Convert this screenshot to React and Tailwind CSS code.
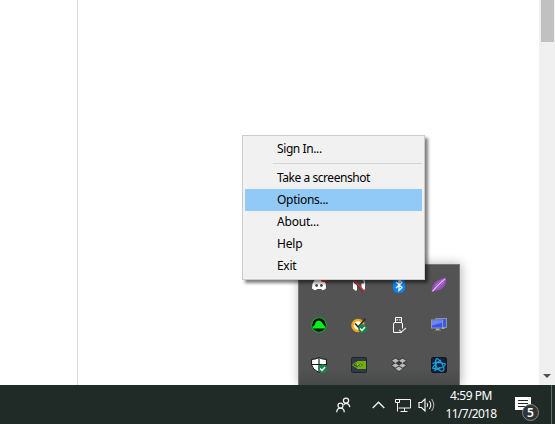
import React from "react";

const Svg = ({ w = 16, h = 16, children }) => (
  <svg width={w} height={h} viewBox={`0 0 ${w} ${h}`} fill="none" className="block shrink-0">
    {children}
  </svg>
);

const Check = ({ x = 11.6, y = 11.6, r = 4.4 }) => (
  <g>
    <circle cx={x} cy={y} r={r} fill="#17834a" />
    <path d={`M${x - 2.4} ${y}l1.8 1.8l3-3.4`} stroke="#fff" strokeWidth="1.4" />
  </g>
);

const Discord = () => (
  <Svg>
    <path d="M3.5 3Q5 2.300 6 2.300l.6.8h3L10.200 2.300q1.500 0 2.800.7Q15.300 6.500 15 11.400Q13 13 11.300 13.200l-.9-1.300H5.800L5 13.200Q3 13 1 11.400Q.8 6.500 3.500 3Z" fill="#fff" />
    <circle cx="5.600" cy="8.500" r="1.400" fill="#484848" />
    <circle cx="10.400" cy="8.500" r="1.400" fill="#484848" />
    <circle cx="13" cy="2" r="3.300" fill="#d8303a" />
  </Svg>
);

const Headset = () => (
  <Svg>
    <path d="M2.500 8V5.500a5.500 5 0 0 1 11 0v2.500" stroke="#f0f0f0" strokeWidth="1.200" />
    <path d="M2 6.500h4v7H4L2 11.500Z" fill="#fff" />
    <path d="M10.500 6.500H14V12l-1.500 1.500h-2Z" fill="#fff" />
    <path d="M2 2.500L13 15" stroke="#404040" strokeWidth="2.200" />
    <path d="M2 2L13.500 14.500" stroke="#e33636" strokeWidth="1.300" />
  </Svg>
);

const Bluetooth = () => (
  <Svg>
    <rect x="2" y="0" width="12" height="16" rx="5.500" fill="#0a84f5" />
    <path d="M5 5l6 5.500L8 13.500v-11L11 5.500L5 11" stroke="#fff" strokeWidth="1.300" />
  </Svg>
);

const Feather = () => (
  <Svg>
    <path d="M.6 15.500C.5 8 4 3 15 .3C16 6 14 10.500 9 12.800C6 14 3.500 13.500 .6 15.500Z" fill="#9150b5" />
    <path d="M1.500 14.300C5 9.800 9 6 14 2" stroke="#e0bdf3" strokeWidth="1.200" />
    <path d="M3.500 9Q7 5.500 11 3M5.500 12Q10 9 13 5" stroke="#b77bd6" strokeWidth=".8" />
  </Svg>
);

const Cloud = () => (
  <Svg>
    <circle cx="8" cy="8" r="7.300" fill="#000" stroke="#0cb518" strokeWidth="1.100" />
    <path d="M2 11.500V9.500l2-1.700Q4.200 3.800 7.500 3.500Q10.500 3.500 11.500 6.200l2.500 3.300v2Z" fill="#00f514" />
  </Svg>
);

const Norton = () => (
  <Svg>
    <circle cx="7" cy="8.500" r="5.500" fill="#fffbed" stroke="#efa71d" strokeWidth="2.500" />
    <path d="M4 6.500L7.300 10L14.500 1.500" stroke="#30302d" strokeWidth="1.800" />
    <Check />
  </Svg>
);

const Usb = () => (
  <Svg>
    <path d="M4.500 5.500V.5h6v5M2.500 15.500V7Q2.500 5.500 4 5.500h6q1.500 0 1.500 1.500v4.500M2.500 15.500h8V14" stroke="#fff" />
    <path d="M5.500 2.200h1.300v1.300H5.500ZM8.200 2.200h1.300v1.300H8.200Z" fill="#fff" />
    <path d="M8 13l2.400 2L15 11" stroke="#d8d8d8" strokeWidth="1.200" />
  </Svg>
);

const Monitors = () => (
  <Svg>
    <rect x="5" y="1.500" width="10.500" height="9" fill="#385cf2" stroke="#8b93a0" />
    <rect x=".5" y="3" width="11" height="8" fill="#3854f2" stroke="#9098a6" />
    <path d="M1 3.500h10v2.200L1 8.500Z" fill="#7084fa" />
    <path d="M5 11.500h3.500V13H5ZM11 10.500h2.500V12H11Z" fill="#aaa" />
    <path d="M4 13.500h6" stroke="#777" />
  </Svg>
);

const Shield = () => (
  <Svg>
    <path d="M8 .5Q11 2.400 15.400 2.400V8Q14.500 12.500 8 15.500Q1.500 12.500 .6 8V2.400Q5 2.400 8 .5Z" fill="#fff" stroke="#111" />
    <path d="M8 1v14M1 7.500h14" stroke="#111" strokeWidth="1.100" />
    <Check />
  </Svg>
);

const Nvidia = () => (
  <Svg>
    <rect x=".5" y=".5" width="15" height="15" rx="1" fill="#303947" stroke="#1e252e" />
    <path d="M6 4h9v8H6Z" fill="#72ad08" />
    <path d="M1.500 8Q6 2.500 13 8Q6.500 13 1.500 8Z" fill="#304b24" stroke="#79b414" />
    <path d="M4 8Q7.500 4.500 10.500 8Q7.500 11 5.500 8Q7 6.500 8.500 8" stroke="#83be20" />
  </Svg>
);

const Dropbox = () => (
  <Svg>
    <path d="M4.500 .5L8 2.700l3.500-2.200L16 3.500L13.500 6L16 8.500L8 15L0 8.500L2.500 6L0 3.500Z" fill="#383838" />
    <path d="M1 3.700l3.500-2.200L8 3.700L4.500 5.900ZM8 3.700l3.500-2.200L15 3.700l-3.500 2.200ZM1 8.500l3.500-2.200L8 8.500l-3.500 2.200ZM8 8.500l3.500-2.200L15 8.500l-3.500 2.200ZM4.500 11.800L8 9.600l3.500 2.200L8 14Z" fill="#b9b9b9" />
  </Svg>
);

const BattleNet = () => (
  <Svg>
    <rect x=".5" y=".5" width="15" height="15" rx="1.500" fill="#142038" stroke="#15171e" />
    <g stroke="#1ca5e2" strokeWidth="1.100">
      <path d="M6 1.500Q3.500 3 5 8.500Q6.500 13 11 14.500" />
      <path d="M6 1.500Q10 3 12.500 10Q14 13 11 14.500" />
      <path d="M1.500 6.500Q6 4 14.500 7Q14 10 8 11.500Q4 12.500 1.500 11Q4 6.500 10 3" />
      <path d="M5 3.500L4 13.500L9.500 10" />
    </g>
  </Svg>
);

const trayIcons = [Discord, Headset, Bluetooth, Feather, Cloud, Norton, Usb, Monitors, Shield, Nvidia, Dropbox, BattleNet];

const MenuItem = ({ children, active, spacing = "tracking-[-0.4px]" }) => (
  <div className={`flex h-[22px] items-center pl-8 text-[12px] leading-[22px] text-black ${spacing} ${active ? "bg-[#91c9f7]" : ""}`}>
    <span>{children}</span>
  </div>
);

export default function App() {
  return (
    <div className="relative flex h-[424px] w-[555px] flex-col overflow-hidden bg-white font-['Noto_Sans',sans-serif]">
      <main className="flex h-[385px]">
        <div className="w-[78px] border-r border-[#dadada]" />
        <div className="flex-1" />
        <div className="flex w-4 flex-col items-center justify-between bg-[#f0f0f0] pb-[7px]">
          <div className="h-[42px] w-[13px] bg-[#c1c1c1]" />
          <Svg w={8} h={4}><path d="M0 0h8L4 4Z" fill="#505050" /></Svg>
        </div>
      </main>

      <footer className="flex h-[39px] items-center bg-[#202b28] text-white">
        <div className="ml-[336px] mt-px">
          <Svg w={16} h={16}>
            <g stroke="#f2f2f2" strokeWidth="1.250">
              <circle cx="10" cy="3.600" r="2.600" />
              <circle cx="4.500" cy="8.600" r="2.500" />
              <path d="M.7 15.200Q1 11.200 4.500 11.200T8.300 15.200M7.800 8Q8.500 6.300 10 6.300Q13.300 6.500 13.800 10.200" />
            </g>
          </Svg>
        </div>
        <div className="ml-[20px]">
          <Svg w={13} h={8}><path d="M.7 7L6.500 1.200L12.300 7" stroke="#eee" strokeWidth="1.400" /></Svg>
        </div>
        <div className="ml-[9px] mt-px">
          <Svg w={18} h={14}>
            <path d="M5 1.500h11.500v8.500H4.500M3.500 5v8.500M10.500 10v3.500M6.500 13.500h7" stroke="#f2f2f2" />
            <path d="M1.500 1.500h4v3h-4Z" stroke="#fff" />
          </Svg>
        </div>
        <div className="ml-[6px]">
          <Svg w={17} h={16}>
            <path d="M1 5.500h2.500L7 2v12L3.500 10.500H1Z" stroke="#fff" strokeWidth="1.100" />
            <path d="M9 6q1.500 2 0 4M11.300 4q3 4 0 8" stroke="#eee" strokeWidth="1.100" />
            <path d="M13.600 2q4.400 6 0 12" stroke="#aaa" strokeWidth="1.100" />
          </Svg>
        </div>
        <div className="ml-[6px] flex w-[60px] flex-col items-center pt-px text-[12px] leading-[18px]">
          <span className="whitespace-nowrap tracking-[-0.45px]">4:59 PM</span>
          <span className="whitespace-nowrap tracking-[-0.65px]">11/7/2018</span>
        </div>
        <div className="relative ml-[14px] mt-[10px] h-[25px] w-6">
          <Svg w={16} h={18}>
            <path d="M0 0h16v13h-4.500v4L7.500 13H0Z" fill="#fff" />
            <path d="M3 3.500h10M3 6.500h10M3 9.500h7" stroke="#202b28" />
          </Svg>
          <span className="absolute left-[7px] top-[7px] flex h-[17px] w-[17px] items-center justify-center rounded-full border border-[#858988] bg-[#303635] text-[12px] font-semibold leading-none">5</span>
        </div>
        <div className="ml-[12px] h-full w-px bg-[#606967]" />
      </footer>

      <div className="absolute left-[298px] top-[264px] grid h-[121px] w-[162px] grid-cols-[repeat(4,40px)] grid-rows-[repeat(3,40px)] border-x border-t border-[#777] bg-linear-to-b from-[#535353] from-85% to-[#484a49] shadow-[1px_0_10px_rgba(0,0,0,0.3)] [clip-path:inset(-14px_-14px_0_-14px)]">
        {trayIcons.map((Icon, i) => (
          <div key={i} className="flex items-center justify-center"><Icon /></div>
        ))}
      </div>

      <div className="absolute left-[242px] top-[135px] h-[145px] w-[183px] border border-[#ccc] bg-[#f1f1f1] p-[2px] shadow-[3px_3px_3px_rgba(0,0,0,0.5)]">
        <MenuItem>Sign In...</MenuItem>
        <div className="mb-[3px] ml-7 mt-[3px] h-px bg-[#d5d5d5]" />
        <MenuItem spacing="tracking-[-0.45px]">Take a screenshot</MenuItem>
        <MenuItem active spacing="tracking-[-0.3px]">Options...</MenuItem>
        <MenuItem spacing="tracking-[-0.2px]">About...</MenuItem>
        <MenuItem spacing="tracking-[-0.2px]">Help</MenuItem>
        <MenuItem spacing="tracking-[-0.3px]">Exit</MenuItem>
      </div>
    </div>
  );
}
